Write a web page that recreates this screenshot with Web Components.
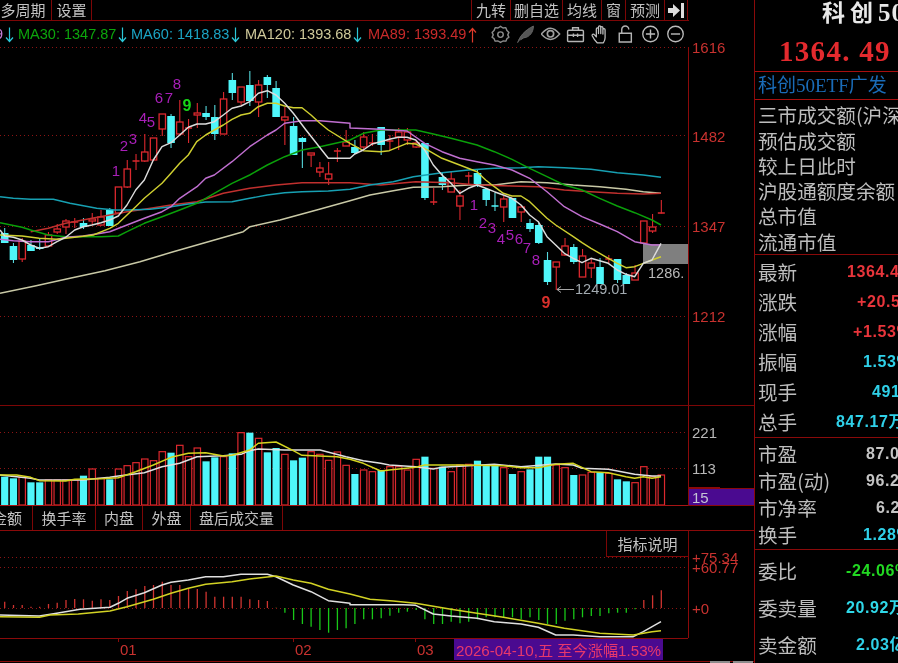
<!DOCTYPE html>
<html lang="zh"><head><meta charset="utf-8"><title>K</title>
<style>
html,body{margin:0;padding:0;background:#000;overflow:hidden;height:100%}
body{font-family:"Liberation Sans","Noto Sans CJK SC",sans-serif}
</style></head><body>
<stock-app>
  <tool-bar slot="left">
    <tool-tab w="52" pr="5">多周期</tool-tab><tool-tab w="40">设置</tool-tab>
    <tool-tab w="380" blank></tool-tab>
    <tool-tab w="39">九转</tool-tab><tool-tab w="52">删自选</tool-tab><tool-tab w="39">均线</tool-tab><tool-tab w="24">窗</tool-tab><tool-tab w="39">预测</tool-tab>
    <tool-tab w="23"><svg width="17" height="15" viewBox="0 0 17 15"><path d="M0 5h5V1l7 6.500-7 6.500v-4H0zM13 0h3v15h-3z" fill="#ddd"/></svg></tool-tab>
  </tool-bar>
  <ma-legend slot="left"></ma-legend>
  <price-pane slot="left"></price-pane>
  <vol-pane slot="left"></vol-pane>
  <tab-row slot="left">
    <tool-tab w="33" clip>成交金额</tool-tab><tool-tab w="63">换手率</tool-tab><tool-tab w="47">内盘</tool-tab><tool-tab w="48">外盘</tool-tab><tool-tab w="92">盘后成交量</tool-tab>
  </tab-row>
  <macd-pane slot="left"><tip-button>指标说明</tip-button></macd-pane>

  <quote-title slot="right" price="1364. 49"><span class="cj">科创</span><span>50ETF广发</span></quote-title>
  <fund-name slot="right">科创50ETF广发</fund-name>
  <quote-block slot="right" pad="2">
    <quote-row h="25.4"><span>三市成交额(沪深京)</span></quote-row>
    <quote-row h="25.4"><span>预估成交额</span></quote-row>
    <quote-row h="25.4"><span>较上日此时</span></quote-row>
    <quote-row h="25.4"><span>沪股通额度余额</span></quote-row>
    <quote-row h="25.4"><span>总市值</span></quote-row>
    <quote-row h="25.4"><span>流通市值</span></quote-row>
  </quote-block>
  <quote-block slot="right" pad="2">
    <quote-row h="30.2" at="847" c="#e8353b"><span>最新</span><span slot="v">1364.49</span></quote-row>
    <quote-row h="30.2" at="857" c="#e8353b"><span>涨跌</span><span slot="v">+20.57</span></quote-row>
    <quote-row h="30.2" at="853" c="#e8353b"><span>涨幅</span><span slot="v">+1.53%</span></quote-row>
    <quote-row h="30.2" at="863" c="#2fd0e8"><span>振幅</span><span slot="v">1.53%</span></quote-row>
    <quote-row h="30.2" at="872" c="#2fd0e8"><span>现手</span><span slot="v">491</span></quote-row>
    <quote-row h="30.2" at="836" c="#2fd0e8"><span>总手</span><span slot="v">847.17万</span></quote-row>
  </quote-block>
  <quote-block slot="right" pad="2">
    <quote-row h="27.3" at="866" c="#c4c4c4"><span>市盈</span><span slot="v">87.06</span></quote-row>
    <quote-row h="27.3" at="866" c="#c4c4c4"><span>市盈(动)</span><span slot="v">96.21</span></quote-row>
    <quote-row h="27.3" at="876" c="#c4c4c4"><span>市净率</span><span slot="v">6.25</span></quote-row>
    <quote-row h="27.3" at="863" c="#2fd0e8"><span>换手</span><span slot="v">1.28%</span></quote-row>
  </quote-block>
  <quote-block slot="right" pad="3" last>
    <quote-row h="37" at="846" c="#22d822"><span>委比</span><span slot="v">-24.06%</span></quote-row>
    <quote-row h="37" at="846" c="#2fd8e8"><span>委卖量</span><span slot="v">20.92万</span></quote-row>
    <quote-row h="37" at="856" c="#2fd0e8"><span>卖金额</span><span slot="v">2.03亿</span></quote-row>
  </quote-block>
</stock-app>
<script>
const LINE='#7d0606',FONT='"Liberation Sans","Noto Sans CJK SC",sans-serif';
const X=i=>4.7+8.755*i;
const poly=(pts,ox,oy,c,w)=>`<polyline fill="none" stroke="${c}" stroke-width="${w||1.45}" stroke-linejoin="round" points="${pts.flatMap(l=>l.pts.map(p=>((l.ox+p[0]/3).toFixed(1)+','+(l.oy+p[1]/3).toFixed(1)))).join(' ')}"/>`;
const seg=(ox,oy,pts)=>({ox,oy,pts});
const dots=(y)=>`<line x1="0" x2="688" y1="${y+.5}" y2="${y+.5}" stroke="#8c1414" stroke-dasharray="1 3"/>`;
const T=(x,y,s,c,o='')=>`<text x="${x}" y="${y}" fill="${c}" font-family='${FONT}' dominant-baseline="central" ${o}>${s}</text>`;
const def=(n,c)=>customElements.define(n,c);
class Base extends HTMLElement{
  connectedCallback(){if(!this.shadowRoot){this.attachShadow({mode:'open'}).innerHTML=this.html()}}
}
def('stock-app',class extends Base{html(){return `<style>
:host{display:flex;width:898px;height:663px;overflow:hidden;background:#000;filter:blur(.42px)}
.l{display:flex;flex-direction:column;width:754px;flex:none}
.r{display:flex;flex-direction:column;width:144px;flex:none;box-sizing:border-box;border-left:1px solid #8a0a0a;overflow:hidden}
</style><div class="l"><slot name="left"></slot></div><div class="r"><slot name="right"></slot></div>`}});

def('tool-bar',class extends Base{html(){return `<style>
:host{display:flex;height:21px;box-sizing:border-box;border-bottom:1px solid ${LINE};width:689px;overflow:hidden}
</style><slot></slot>`}});
def('tool-tab',class extends Base{html(){const w=this.getAttribute('w');const clip=this.hasAttribute('clip');const blank=this.hasAttribute('blank');const pr=this.getAttribute('pr');return `<style>
:host{display:flex;align-items:center;justify-content:${clip?'flex-end':'center'};flex:none;width:${w}px;box-sizing:border-box;
border-right:1px solid ${blank?'#7d0606':LINE};color:#c2c2c2;font:15px "Noto Sans CJK SC",sans-serif;white-space:nowrap;overflow:hidden;line-height:20px;${clip?'padding-right:10px;':''}${pr?`padding-right:${pr}px;`:''}}
</style><slot></slot>`}});

const gear=`<path d="M12 2.800l3 2 3.400-.4 1.300 3.300 2.400 2.400-1.400 2.900 1.400 2.900-2.400 1.700-1.300 3-3.400-.2-3 1.700-3-1.700-3.400.2-1.300-3-2.400-1.700 1.400-2.900-1.400-2.900 2.400-2.400 1.300-3.300 3.400.4z" fill="none" stroke="#8c8c8c" stroke-width="1.700" stroke-linejoin="round"/><circle cx="12" cy="12.700" r="3.300" fill="none" stroke="#8c8c8c" stroke-width="1.700"/>`;
const feather=`<path d="M2.500 22.500C5 15 11 7.500 21.500 2.500c0 7-4.500 13.500-11.500 14l-4 2.500" fill="#565656" stroke="#666" stroke-width="1.200"/>`;
const eye=`<path d="M1 12C5.500 6.500 9 5 12 5S18.500 6.500 23 12C18.500 17.200 15 18.500 12 18.500S5.500 17.200 1 12z" fill="none" stroke="#a0a0a0" stroke-width="1.700"/><circle cx="12" cy="11.800" r="3.800" fill="none" stroke="#a0a0a0" stroke-width="2"/>`;
const box=`<path d="M4 7.500h16a1.500 1.500 0 0 1 1.500 1.500v11a1 1 0 0 1-1 1h-17a1 1 0 0 1-1-1V9A1.500 1.500 0 0 1 4 7.500zM2.500 13.500h19M8.500 7.500V4.500h7v3M9.500 11.500v4M14.500 11.500v4" fill="none" stroke="#b4b4b4" stroke-width="1.700"/>`;
const hand=`<path d="M8 22.500c-2-2-4.500-5.500-6-8.500-.6-1.600 1.500-2.700 2.600-1.200L7 15.500V6c0-1.800 2.600-1.800 2.600 0v5.500V3.500c0-1.800 2.700-1.800 2.700 0v8V4.500c0-1.800 2.600-1.800 2.600 0v7.500V7c0-1.800 2.600-1.800 2.600 0v9.500c0 2.200-1 4.500-2 6z" fill="none" stroke="#c2c2c2" stroke-width="1.500" stroke-linejoin="round"/>`;
const lock=`<path d="M4.500 11h14.500v10.500H4.500zM7.500 11V6.500a4.200 4.200 0 0 1 8.400 0" fill="none" stroke="#b4b4b4" stroke-width="1.700"/>`;
const plus=`<circle cx="12" cy="12" r="9.300" fill="none" stroke="#bcbcbc" stroke-width="1.600"/><path d="M6.500 12h11M12 6.500v11" stroke="#bcbcbc" stroke-width="1.700"/>`;
const minus=`<circle cx="12" cy="12" r="9.300" fill="none" stroke="#bcbcbc" stroke-width="1.600"/><path d="M6.500 12h11" stroke="#bcbcbc" stroke-width="1.700"/>`;
const arrow=(c,up)=>`<svg width="11" height="16" viewBox="0 0 11 16"><path d="${up?'M5.500 15.500V2M2 5.500L5.500 1.500 9 5.500':'M5.500 .5V14M2 10.500L5.500 14.500 9 10.500'}" fill="none" stroke="${c}" stroke-width="1.200"/></svg>`;
def('ma-legend',class extends Base{html(){
 const it=(x,w,t,c,ac,up)=>`<span class="i" style="width:${w}px;color:${c}">${t}<b>${arrow(ac,up)}</b></span>`;
 return `<style>
:host{display:flex;align-items:center;height:26px;width:689px;overflow:hidden;font:14.5px "Liberation Sans",sans-serif;white-space:nowrap;box-sizing:border-box;padding-right:1px}
.i{display:flex;align-items:center;flex:none}
b{display:flex;margin-left:1px;margin-top:2px}
.ic{display:flex;margin-left:auto}
.ic svg{width:20px;height:20px;padding:0 2.500px;flex:none}
</style>
<span class="i" style="width:18px;color:#c77ed8;margin-left:-5px;width:23px">9<b>${arrow('#2cc8d8')}</b></span>
${it(0,113,'MA30: 1347.87','#0ca60c','#2cc8d8')}${it(0,114,'MA60: 1418.83','#1ba4c4','#2cc8d8')}${it(0,123,'MA120: 1393.68','#cfc99a','#2cc8d8')}${it(0,110,'MA89: 1393.49','#c92a2a','#e03a2a',1)}
<span class="ic">${[gear,feather,eye,box,hand,lock,plus,minus].map(s=>`<svg viewBox="0 0 24 24">${s}</svg>`).join('')}</span>`}});

// candles: [body top, body bottom, high, low, type]
const C=`233 243 228 243 c|246 260 243 263 c|241 259 238 262 r|245 251 240 251 c|247 249 239 250 c|235 246 232 247 r|229 232 224 234 r|221 227 219 234 r|222 223 218 228 r|223 227 218 229 c|219 221 213 225 r|217 225 210 226 r|210 226 208 226 c|187 213 187 213 r|169 187 160 188 r|161 161.500 154 170 r|152 161 134 162 r|138 160 138 160 r|114 129 114 136 r|116 143 114 148 c|122 134 100 134 r|128 129 119 143 r|113 115 103 128 r|113 117 106 120 c|117 134 105 140 c|99 134 92 134 r|80 93 73 100 c|87 102 87 105 r|85 101 71 106 c|85 102 80 117 r|77 85 75 98 c|88 117 81 117 c|117 120 107 145 r|126 155 117 155 c|138 142 137 168 c|153 155 153 167 r|168 172 162 177 r|174 179 162 185 r|151 152 148 162 r|142 146 130 146 r|147 153 140 154 c|137 147 132 150 r|143 143.500 134 146 r|127 145 127 155 c|141 142 135 150 r|132 137 128 150 r|132 140 128 145 r|143 147 140 148 r|143 198 143 200 c|202 202.500 188 205 r|177 185 172 190 c|179 192 172 192 r|196 206 190 220 r|176 176.500 172 185 r|173 185 170 187 c|189 200 188 206 c|206 207 193 211 c|199 207 196 222 r|198 218 198 218 c|207 212 205 222 r|223 229 219 232 c|225 243 223 244 c|260 282 252 285 c|262 267 262 290 r|246 255 238 256 r|247 262 244 264 c|256 277 249 277 r|263 268 258 278 r|267 284 258 284 c|259 260 255 263 r|259 280 259 283 c|275 284 273 284 c|273 280 265 280 r|221 243 221 243 r|227 231 214 233 r|213 213.500 200 213.500 r`.split('|').map(s=>s.split(' '));
const candles=()=>C.map((a,i)=>{const x=X(i),t=+a[0],b=+a[1],h=+a[2],l=+a[3],red=a[4]=='r',col=red?'#dc282e':'#4ff6fa';
 let s=`<line x1="${x}" x2="${x}" y1="${h}" y2="${l}" stroke="${red?'#dc282e':'#55d8dc'}" stroke-width="1.100"/>`;
 if(b-t<2)s+=`<line x1="${x-3.500}" x2="${x+3.500}" y1="${t}" y2="${t}" stroke="${col}" stroke-width="1.500"/>`;
 else if(red)s+=`<rect x="${x-3.200}" y="${t}" width="6.400" height="${b-t}" fill="#000" stroke="${col}" stroke-width="1.300"/>`;
 else s+=`<rect x="${x-3.800}" y="${t}" width="7.600" height="${b-t}" fill="${col}"/>`;
 return s}).join('');
const MA={
white:[seg(0,130,[[0,300],[14,318],[40,322],[66,330],[92,345],[118,355],[145,350],[171,335],[197,322],[224,300],[250,290],[276,285],[303,278],[329,270],[355,258],[381,225],[407,180],[433,150],[460,90],[486,50],[513,38],[539,15]]),seg(0,0,[[565,382],[591,372],[617,372],[643,365],[670,345],[696,325],[723,318],[749,305],[775,280],[802,272],[828,285],[854,310],[880,340]]),seg(0,130,[[918,0],[985,85],[1050,85]]),seg(350,130,[[14,72],[40,60],[66,42],[92,35],[118,28],[145,22],[171,22],[197,30],[224,60],[250,105],[276,135],[303,160],[329,190],[355,175],[381,165],[407,175],[433,185],[460,195],[486,205],[513,225],[539,255],[565,275],[591,320],[617,345],[643,370],[670,385],[696,398],[723,385],[749,392],[775,400],[802,420],[828,433],[854,440],[880,400],[906,390],[933,340]])],
yellow:[seg(0,130,[[0,315],[66,318],[118,325],[171,328],[224,322],[280,315],[329,295],[355,280],[381,255],[407,230],[433,205],[486,160],[513,130],[539,100],[565,75],[590,35],[617,15]]),seg(0,0,[[643,390],[670,375],[696,358],[723,345],[749,340],[775,320],[802,310],[828,310],[854,318],[880,323],[906,323],[933,345],[960,370],[985,390]]),seg(0,130,[[1050,40]]),seg(350,130,[[40,62],[92,65],[118,62],[171,40],[197,42],[224,55],[276,85],[329,105],[381,125],[407,150],[433,170],[460,190],[486,198],[513,198],[539,215],[565,240],[591,265],[617,285],[670,320],[696,338],[723,355],[749,370],[775,385],[802,400],[828,413],[854,410],[880,400],[906,390],[933,380]])],
pink:[seg(0,130,[[0,328],[40,332],[92,335],[145,335],[197,322],[250,318],[303,310],[329,305],[381,285],[433,265],[486,245],[513,230],[539,205],[591,170],[617,145],[643,135],[696,95],[749,50],[802,15]]),seg(0,0,[[828,390],[854,370],[906,362],[960,362],[1050,370]]),seg(350,130,[[0,-6],[90,-2],[171,3],[224,40],[276,65],[329,85],[381,95],[433,105],[486,120],[539,145],[591,185],[643,230],[696,260],[749,282],[802,305],[854,335],[906,345],[933,345]])],
green:[seg(0,130,[[0,278],[66,292],[92,300],[145,315],[197,320],[250,320],[303,320],[355,318],[381,305],[433,280],[486,260],[539,240],[591,220],[643,190],[696,160],[749,135],[802,105],[854,80],[906,60],[960,50],[1050,30]]),seg(350,130,[[40,10],[92,0],[197,0],[250,12],[303,25],[381,45],[433,65],[486,88],[539,115],[591,140],[643,165],[696,180],[749,205],[802,228],[854,248],[906,270],[933,285]])],
cyan:[seg(0,130,[[0,200],[40,205],[92,208],[160,208],[210,220],[290,235],[345,240],[381,240],[450,238],[513,230],[565,222],[617,216],[696,215],[749,205],[802,195],[854,188],[906,185],[985,183],[1050,178]]),seg(350,130,[[60,165],[130,155],[190,140],[276,128],[355,120],[433,115],[513,113],[565,110],[643,113],[723,118],[802,128],[880,135],[933,142]])],
tan:[seg(0,130,[[0,490],[105,468],[210,445],[315,422],[420,395],[520,365],[625,335],[730,305],[750,290],[840,270],[950,240],[1050,212]]),seg(350,130,[[60,195],[130,182],[190,172],[276,170],[355,165],[433,165],[513,155],[591,158],[670,165],[749,170],[828,178],[880,185],[933,190]])],
red:[seg(0,130,[[92,305],[145,295],[197,280],[276,265],[329,255],[381,245],[433,238],[513,225],[591,215],[670,190],[749,175],[828,165],[906,158],[1050,158]]),seg(350,130,[[92,165],[197,155],[303,158],[381,165],[486,168],[565,170],[643,180],[723,185],[802,190],[880,192],[933,190]])]
};
const P=(k,c,w)=>poly(MA[k],0,0,c,w);
const num=(x,y,s,c,sz=14)=>T(x,y,s,c,`font-size="${sz}"`);
def('price-pane',class extends Base{html(){
 const m='#a81fb8';
 const labels=[[116,170,1],[124,145,2],[133,138,3],[143,117,4],[151,121,5],[159,97,6],[169,97,7],[177,83,8],[474,204,1],[483,222,2],[492,227,3],[501,238,4],[510,234,5],[519,238,6],[527,247,7],[536,259,8]];
 return `<style>:host{display:block;height:359px;width:754px}svg{display:block;overflow:visible}</style>
<svg width="754" height="359" viewBox="0 47 754 359">
${[47,135,226,316].map(dots).join('')}
<rect x="643" y="244" width="45" height="20" fill="#7f7f7f"/>
${candles()}
${P('tan','#c9c9a6')}${P('red','#c0302e')}${P('cyan','#17a0b2')}${P('green','#0aa00a')}${P('pink','#c06fd0')}${P('yellow','#cfcf30')}${P('white','#dcdcdc')}
${labels.map(l=>T(l[0],l[1],l[2],m,'font-size="15" text-anchor="middle"')).join('')}
${T(187,105,9,'#18d418','font-size="16" font-weight="700" text-anchor="middle"')}
${T(546,302,9,'#d8302c','font-size="16" font-weight="700" text-anchor="middle"')}
<path d="M574 289.500H557M561 286.500l-4 3 4 3" fill="none" stroke="#a8a8a8" stroke-width="1"/>
${T(575,289,'1249.01','#a2aab0','font-size="14.500"')}
${T(648,273,'1286.','#b8b8b8','font-size="14.500"')}
<line x1="688.500" x2="688.500" y1="47" y2="405" stroke="#8a0a0a"/>
<line x1="0" x2="754" y1="405.500" y2="405.500" stroke="${LINE}"/>
${[[47,1616],[136,1482],[226,1347],[316,1212]].map(a=>num(692,a[0],a[1],'#c8322f',15)).join('')}
</svg>`}});

const VOL=`170c 175c 172r 187c 187c 180r 180r 180r 180r 167c 147r 175r 178c 147r 137r 128r 117r 122r 95r 98c 76r 110r 84r 124c 112c 110r 100c 38r 38c 55r 97c 84c 103r 121c 113c 95r 103r 121r 96r 136r 162c 150r 155r 150c 140r 140r 150r 118r 110c 145r 140c 155r 135r 133r 122c 138c 133c 143r 162c 155r 148c 110c 110c 135r 143r 165c 165r 157r 157c 160r 178c 184c 188r 140r 170r 165r`.split(' ');
def('vol-pane',class extends Base{html(){
 const bars=VOL.map((v,i)=>{const y=420+parseInt(v)/3,x=X(i);return v.endsWith('r')?`<rect x="${x-3.200}" y="${y}" width="6.400" height="${505-y}" fill="#000" stroke="#dc282e" stroke-width="1.200"/>`:`<rect x="${x-3.600}" y="${y}" width="7.200" height="${505.500-y}" fill="#4ff6fa"/>`}).join('');
 const w=[seg(0,420,[[0,165],[92,175],[118,180],[250,180],[276,177],[329,172],[355,168],[433,158],[486,140],[539,130],[591,110],[670,107],[723,103],[749,92],[775,87],[854,90],[960,90],[1038,110]]),seg(350,420,[[40,122],[92,130],[118,135],[197,140],[250,147],[276,142],[433,133],[513,140],[617,132],[670,135],[696,145],[775,148],[854,163],[906,168],[933,168]])];
 const y=[seg(0,420,[[0,165],[50,165],[92,172],[118,182],[197,183],[224,178],[303,176],[355,173],[407,155],[460,135],[513,112],[565,100],[617,98],[670,108],[696,106],[749,90],[775,70],[828,66],[880,92],[906,106],[1011,110],[1050,118]]),seg(350,420,[[40,130],[92,153],[118,150],[197,142],[224,135],[329,135],[460,137],[513,143],[565,143],[617,133],[670,130],[723,155],[775,158],[828,170],[854,175],[880,170],[906,175],[933,170]])];
 return `<style>:host{display:block;height:100px;width:754px}svg{display:block}</style>
<svg width="754" height="100" viewBox="0 406 754 100">
${[432,468].map(dots).join('')}
${bars}${poly(w,0,0,'#e0e0e0')}${poly(y,0,0,'#d4d420')}
<line x1="688.500" x2="688.500" y1="406" y2="506" stroke="#8a0a0a"/>
<line x1="0" x2="688" y1="505.500" y2="505.500" stroke="#a81414"/>
<path d="M689 487.500h31" stroke="#8a0a0a"/>
<rect x="689" y="489" width="65" height="16" fill="#4a0a90"/><path d="M689 488.500h65M689 505.500h65" stroke="#8a0a0a"/>
${num(692,432,221,'#b8b8b8',15)}${num(692,468,113,'#b8b8b8',15)}${num(692,497.500,15,'#c4c4d4',15)}
</svg>`}});
def('tab-row',class extends Base{html(){return `<style>:host{display:flex;height:25px;box-sizing:border-box;width:754px;border-bottom:1px solid #8a0a0a}</style><slot></slot>`}});
def('tip-button',class extends Base{html(){return `<style>:host{position:absolute;top:0;left:606px;width:83px;height:26px;box-sizing:border-box;display:flex;align-items:center;justify-content:center;border:1px solid #7d0606;border-top:0;color:#c2c2c2;font:15px "Noto Sans CJK SC",sans-serif;background:#000}</style><slot></slot>`}});
def('macd-pane',class extends Base{html(){
 const tops=[215,225,225,230,230,222,218,210,207,208,212,208,210,198,183,178,168,165,155,165,165,175,177,185,200,200,200,200,208,210,213,233,248,270,282,290,300,308,300,295,282,268,268,265,257,248,245,240,268,282,282,275,280,275,268,262,262,262,262,268,262,270,282,282,272,268,262,258,258,250,248,248,238,210,196,181];
 const bars=tops.map((z,i)=>{const y=530+z/3,x=X(i).toFixed(1),up=z<235;return `<line x1="${x}" x2="${x}" y1="608" y2="${y.toFixed(1)}" stroke="${z==233?'#a8a820':up?'#d03430':'#18c818'}" stroke-width="1.300"/>`}).join('');
 const w=[seg(0,530,[[0,255],[118,258],[170,250],[240,238],[330,232],[355,220],[381,205],[433,188],[486,165],[513,157],[565,150],[617,140],[670,140],[723,133],[802,133],[828,140],[880,165],[933,185],[985,212],[1050,220]]),seg(350,530,[[0,224],[160,224],[197,226],[250,252],[303,258],[381,265],[433,275],[513,282],[565,292],[617,315],[670,315],[750,320],[850,320],[880,305],[933,275]])];
 const y=[seg(0,530,[[0,260],[118,262],[150,255],[235,252],[330,243],[381,230],[460,208],[513,190],[565,175],[617,163],[696,155],[749,147],[828,138],[880,150],[933,160],[985,178],[1050,192]]),seg(350,530,[[60,208],[130,213],[197,220],[303,238],[381,250],[460,262],[565,280],[643,295],[749,310],[850,315],[906,305],[933,302]])];
 return `<style>:host{display:block;position:relative;height:132px;width:754px}svg{display:block}</style>
<slot></slot>
<svg width="754" height="132" viewBox="0 531 754 132">
${[557,567,608].map(dots).join('')}
${bars}${poly(w,0,0,'#e0e0e0',1.500)}${poly(y,0,0,'#d2d224',1.500)}
<line x1="688.500" x2="688.500" y1="531" y2="638" stroke="#8a0a0a"/>
<line x1="0" x2="688" y1="638.500" y2="638.500" stroke="#8a0a0a"/>
<path d="M118.500 638v4M293.500 638v4M415.500 638v4" stroke="#8a0a0a"/>
${num(692,557,'+75.34','#c8322f',15)}${num(692,567,'+60.77','#c8322f',15)}${num(692,608,'+0','#c8322f',15)}
${num(120,649.500,'01','#c8322f',15)}${num(295,649.500,'02','#c8322f',15)}${num(417,649.500,'03','#c8322f',15)}
<rect x="454" y="639" width="209" height="21" fill="#4a0a90"/>
${T(456,650,'2026-04-10,五 至今涨幅1.53%','#e8386c','font-size="15.200"')}
<line x1="0" x2="754" y1="661.500" y2="661.500" stroke="#8a0a0a"/>
<path d="M710 662h20M733 662h20" stroke="#8c8c8c" stroke-width="2"/>
</svg>`}});

def('quote-title',class extends Base{html(){return `<style>
:host{display:block;height:72px;box-sizing:border-box;border-bottom:1px solid #a80e0e;overflow:hidden;white-space:nowrap}
.n{height:30px;padding-left:67px;font:700 25px/25px "Liberation Serif","Noto Sans CJK SC",serif;color:#e8e8e8;letter-spacing:1px}
::slotted(.cj){font-size:23px;letter-spacing:5px}
.p{padding-left:24px;font:700 29px/42px "Liberation Serif",serif;color:#e42a2e;letter-spacing:1.300px}
</style><div class="n"><slot></slot></div><div class="p">${this.getAttribute('price')}</div>`}});
def('fund-name',class extends Base{html(){return `<style>
:host{display:block;height:29px;box-sizing:border-box;border-bottom:1px solid #a80e0e;padding-left:3px;color:#1a6cb8;font:19px/28px "Liberation Serif","Noto Sans CJK SC",serif;white-space:nowrap;overflow:hidden}
</style><slot></slot>`}});
def('quote-block',class extends Base{html(){return `<style>
:host{display:flex;flex-direction:column;box-sizing:border-box;padding-top:${this.getAttribute('pad')}px;${this.hasAttribute('last')?'':'border-bottom:1px solid #8a0a0a'};overflow:hidden}
</style><slot></slot>`}});
def('quote-row',class extends Base{html(){const h=this.getAttribute('h'),at=this.getAttribute('at'),c=this.getAttribute('c')||'#ccc';return `<style>
:host{display:flex;align-items:center;height:${h}px;white-space:nowrap;width:170px}
.l{color:#bdbdbd;font:19.600px/1 "Noto Sans CJK SC",sans-serif;padding-left:3px;flex:none;${at?`width:${at-755-3}px`:''}}
.v{color:${c};font:700 16px/1 "Liberation Sans","Noto Sans CJK SC",sans-serif;letter-spacing:.6px}
</style><span class="l"><slot></slot></span><span class="v"><slot name="v"></slot></span>`}});
</script>
</body></html>
